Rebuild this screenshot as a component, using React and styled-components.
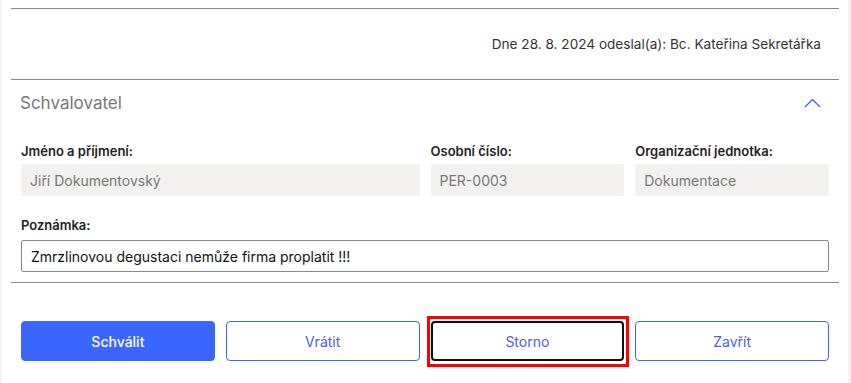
import styled, { createGlobalStyle } from "styled-components";

const GlobalStyle = createGlobalStyle`
  * { box-sizing: border-box; }
  body {
    margin: 0;
    background: #f3f3f3;
    font-family: Inter, "Noto Sans", sans-serif;
    color: #222;
  }
`;

const Page = styled.div`
  margin: 0 3px 0 2px;
  height: 383px;
  background: #fff;
  padding: 8px 9px 0;
`;

const Divider = styled.hr`
  margin: 0;
  border: none;
  border-top: 1px solid #8a8a8a;
`;

const Meta = styled.div`
  height: 70px;
  display: flex;
  align-items: center;
  justify-content: flex-end;
  padding-right: 18px;
  font-size: 13.6px;
  color: #333;
`;

const SectionHeader = styled.div`
  height: 46px;
  display: flex;
  align-items: center;
  justify-content: space-between;
  padding: 0 18px 0 9px;
  cursor: pointer;
`;

const SectionTitle = styled.h2`
  margin: 0;
  font-size: 17px;
  font-weight: 400;
  color: #777;
`;

const Body = styled.div`
  padding: 17px 10px 10px;
`;

const Grid = styled.div`
  display: grid;
  grid-template-columns: repeat(4, 1fr);
  column-gap: 11px;
`;

const Field = styled.div`
  grid-column: span ${(p) => p.span || 1};
  display: flex;
  flex-direction: column;
  gap: 5px;
`;

const Label = styled.label`
  font-size: 13px;
  line-height: 16px;
  font-weight: 600;
  color: #222;
`;

const ReadOnly = styled.div`
  height: 32px;
  display: flex;
  align-items: center;
  padding: 0 9px;
  background: #f2f1f0;
  border-radius: 2px;
  font-size: 14px;
  color: #777;
`;

const NoteField = styled(Field)`
  margin-top: 21px;
  gap: 7px;
`;

const NoteInput = styled.div`
  height: 32px;
  display: flex;
  align-items: center;
  padding: 0 9px;
  border: 1px solid #8a8a8a;
  border-radius: 2px;
  font-size: 14px;
  color: #111;
`;

const Actions = styled(Grid)`
  padding: 38px 10px 0;
`;

const Button = styled.button`
  position: relative;
  height: 40px;
  border-radius: 4px;
  font-family: inherit;
  font-size: 14px;
  font-weight: ${(p) => (p.primary ? 500 : 400)};
  cursor: pointer;
  background: ${(p) => (p.primary ? "#3a66ff" : "#fff")};
  color: ${(p) => (p.primary ? "#fff" : "#4a5cf2")};
  border: ${(p) => (p.focused ? "2px solid #111" : "1px solid #3a66ff")};
  outline: none;

  ${(p) =>
    p.focused &&
    `
    &::after {
      content: "";
      position: absolute;
      inset: -7px -7px -8px -6px;
      border: 3px solid #ff0000;
      pointer-events: none;
    }
  `}
`;

const Chevron = () => (
  <svg width="17" height="10" viewBox="0 0 17 10" fill="none">
    <path d="M1 9 L8.5 1.5 L16 9" stroke="#3a66ff" strokeWidth="1.3" />
  </svg>
);

const fields = [
  { label: "Jméno a příjmení:", value: "Jiří Dokumentovský", span: 2 },
  { label: "Osobní číslo:", value: "PER-0003" },
  { label: "Organizační jednotka:", value: "Dokumentace" },
];

export default function App() {
  return (
    <>
      <GlobalStyle />
      <Page>
        <Divider />
        <Meta>Dne 28. 8. 2024 odeslal(a): Bc. Kateřina Sekretářka</Meta>
        <Divider />
        <SectionHeader>
          <SectionTitle>Schvalovatel</SectionTitle>
          <Chevron />
        </SectionHeader>
        <Body>
          <Grid>
            {fields.map((f) => (
              <Field key={f.label} span={f.span}>
                <Label>{f.label}</Label>
                <ReadOnly>{f.value}</ReadOnly>
              </Field>
            ))}
          </Grid>
          <NoteField>
            <Label>Poznámka:</Label>
            <NoteInput>Zmrzlinovou degustaci nemůže firma proplatit !!!</NoteInput>
          </NoteField>
        </Body>
        <Divider />
        <Actions>
          <Button primary>Schválit</Button>
          <Button>Vrátit</Button>
          <Button focused>Storno</Button>
          <Button>Zavřít</Button>
        </Actions>
      </Page>
    </>
  );
}
